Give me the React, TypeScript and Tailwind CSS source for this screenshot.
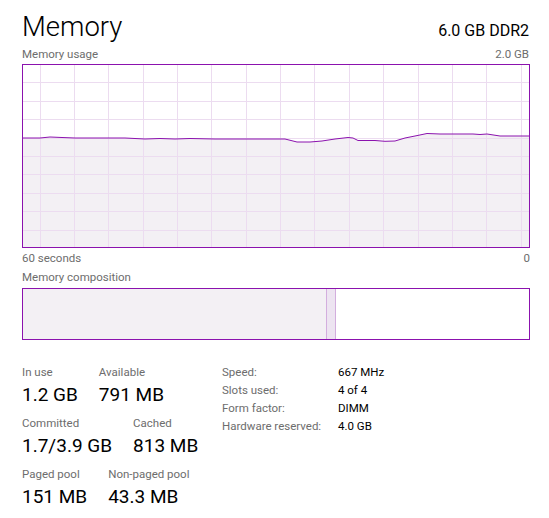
import React from "react";

const pts: [number, number][] = [
  [-1, 73], [17, 73], [27, 72], [39, 72.5], [52, 73], [102, 73], [122, 74], [137, 73.5],
  [152, 74], [167, 73.5], [192, 74], [262, 74], [274, 77], [287, 77], [299, 76], [312, 74],
  [325, 72.5], [330, 73], [335, 75.5], [352, 75.5], [362, 76.3], [372, 76], [382, 73],
  [392, 71], [404, 68.5], [417, 69], [450, 69], [457, 69.5], [464, 69], [477, 71], [507, 71],
];

function Graph() {
  const line = pts.map((p) => p.join(",")).join(" ");
  const fill = line + " 507,182 -1,182";
  const vx = Array.from({ length: 15 }, (_, k) => Math.round(16.5 + 34.37 * k) + 0.5);
  const hy = Array.from({ length: 9 }, (_, k) => Math.round(18.4 * (k + 1) - 1) + 0.5);
  return (
    <svg width={506} height={182} className="block">
      <polygon points={fill} fill="#f3f0f4" />
      {vx.map((x) => (
        <line key={"v" + x} x1={x} y1={0} x2={x} y2={182} stroke="#ecdcf0" strokeWidth={1} />
      ))}
      {hy.map((y) => (
        <line key={"h" + y} x1={0} y1={y} x2={506} y2={y} stroke="#ecdcf0" strokeWidth={1} />
      ))}
      <polyline points={line} fill="none" stroke="#8b12ae" strokeWidth={1} />
    </svg>
  );
}

function Stat({ label, value }: { label: string; value: string }) {
  return (
    <div className="flex flex-col">
      <div className="text-[11.5px] leading-[21px] text-[#6d6d6d] whitespace-nowrap">{label}</div>
      <div className="text-[19px] leading-[24px] text-black whitespace-nowrap">{value}</div>
    </div>
  );
}

export default function App() {
  return (
    <div className="w-[549px] h-[518px] bg-white pl-[22px] pr-[20px] font-['Roboto',sans-serif] overflow-hidden">
      <div className="flex justify-between items-start pt-[7px] h-[47px]">
        <div className="text-[27.5px] font-light leading-[40px] text-black">Memory</div>
        <div className="text-[16px] leading-[40px] mt-[4px] text-black">6.0 GB DDR2</div>
      </div>
      <div className="flex justify-between text-[11.5px] leading-[14px] text-[#6d6d6d]">
        <span>Memory usage</span>
        <span>2.0 GB</span>
      </div>
      <div className="mt-[3px] w-[508px] h-[184px] border border-[#8b12ae]">
        <Graph />
      </div>
      <div className="flex justify-between mt-[3px] text-[11.5px] leading-[14px] text-[#6d6d6d] w-[508px]">
        <span>60 seconds</span>
        <span>0</span>
      </div>
      <div className="mt-[5px] text-[11.5px] leading-[14px] text-[#6d6d6d]">Memory composition</div>
      <div className="mt-[4px] w-[508px] h-[52px] border border-[#8b12ae] flex">
        <div className="w-[303px] h-full bg-[#f3f0f4]" />
        <div className="w-[10px] h-full bg-[#ede4f1] border-x border-[#d3aede]" />
        <div className="flex-1 h-full bg-white" />
      </div>
      <div className="mt-[22px] flex items-start">
        <div className="w-[200px] flex flex-col gap-[6px]">
          <div className="flex gap-[21px]">
            <Stat label="In use" value="1.2 GB" />
            <Stat label="Available" value="791 MB" />
          </div>
          <div className="flex gap-[21px]">
            <Stat label="Committed" value="1.7/3.9 GB" />
            <Stat label="Cached" value="813 MB" />
          </div>
          <div className="flex gap-[21px]">
            <Stat label="Paged pool" value="151 MB" />
            <Stat label="Non-paged pool" value="43.3 MB" />
          </div>
        </div>
        <div className="pt-[1px] grid grid-cols-[116px_auto] auto-rows-[18px] text-[11.5px] leading-[18px]">
          <span className="text-[#6d6d6d]">Speed:</span>
          <span className="text-black">667 MHz</span>
          <span className="text-[#6d6d6d]">Slots used:</span>
          <span className="text-black">4 of 4</span>
          <span className="text-[#6d6d6d]">Form factor:</span>
          <span className="text-black">DIMM</span>
          <span className="text-[#6d6d6d]">Hardware reserved:</span>
          <span className="text-black">4.0 GB</span>
        </div>
      </div>
    </div>
  );
}
